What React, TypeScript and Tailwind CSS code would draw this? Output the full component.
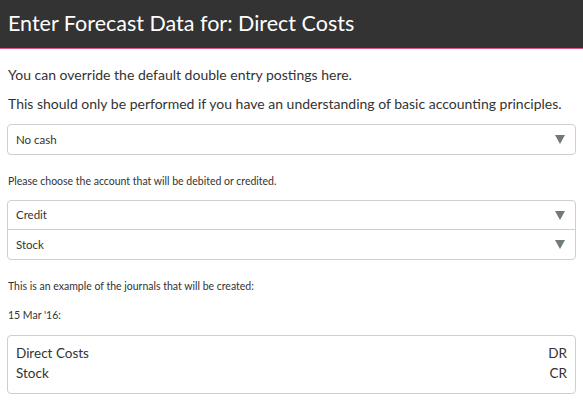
import React from "react";

const Arrow = () => (
  <svg width="10" height="9" viewBox="0 0 10 9" className="shrink-0">
    <polygon points="0,0 10,0 5,9" fill="#6f7b74" />
  </svg>
);

export default function App() {
  return (
    <div className="w-[583px] h-[404px] bg-white text-[#333]" style={{ fontFamily: "Lato, 'Open Sans', sans-serif" }}>
      <div className="h-[49px] bg-[#333333] border-b border-[#e0577f] flex items-center px-[8px]">
        <h1 className="text-white text-[21.5px] leading-none pb-[1px]">Enter Forecast Data for: Direct Costs</h1>
      </div>
      <div className="px-[7px]">
        <p className="text-[14px] leading-[18px] mt-[17px] pl-[1px]">You can override the default double entry postings here.</p>
        <p className="text-[14px] leading-[18px] mt-[11px] pl-[1px]">This should only be performed if you have an understanding of basic accounting principles.</p>
        <div className="mt-[11px] h-[31px] border border-[#cfcfcf] rounded-[4px] flex items-center justify-between pl-[8px] pr-[10px]">
          <span className="text-[11.5px]">No cash</span>
          <Arrow />
        </div>
        <p className="text-[10.5px] leading-[14px] mt-[19px] pl-[1px]">Please choose the account that will be debited or credited.</p>
        <div className="mt-[12px] border border-[#cfcfcf] rounded-[4px]">
          <div className="h-[29px] flex items-center justify-between pl-[8px] pr-[10px] border-b border-[#cfcfcf]">
            <span className="text-[11.5px]">Credit</span>
            <Arrow />
          </div>
          <div className="h-[29px] flex items-center justify-between pl-[8px] pr-[10px]">
            <span className="text-[11.5px]">Stock</span>
            <Arrow />
          </div>
        </div>
        <p className="text-[10.5px] leading-[14px] mt-[19px] pl-[1px]">This is an example of the journals that will be created:</p>
        <p className="text-[10.5px] leading-[14px] mt-[15px] pl-[1px]">15 Mar '16:</p>
        <div className="mt-[13px] border border-[#cfcfcf] rounded-[4px] px-[8px] pt-[7px] pb-[10px] text-[13.5px] leading-[20px]">
          <div className="flex justify-between"><span>Direct Costs</span><span>DR</span></div>
          <div className="flex justify-between"><span>Stock</span><span>CR</span></div>
        </div>
      </div>
    </div>
  );
}
